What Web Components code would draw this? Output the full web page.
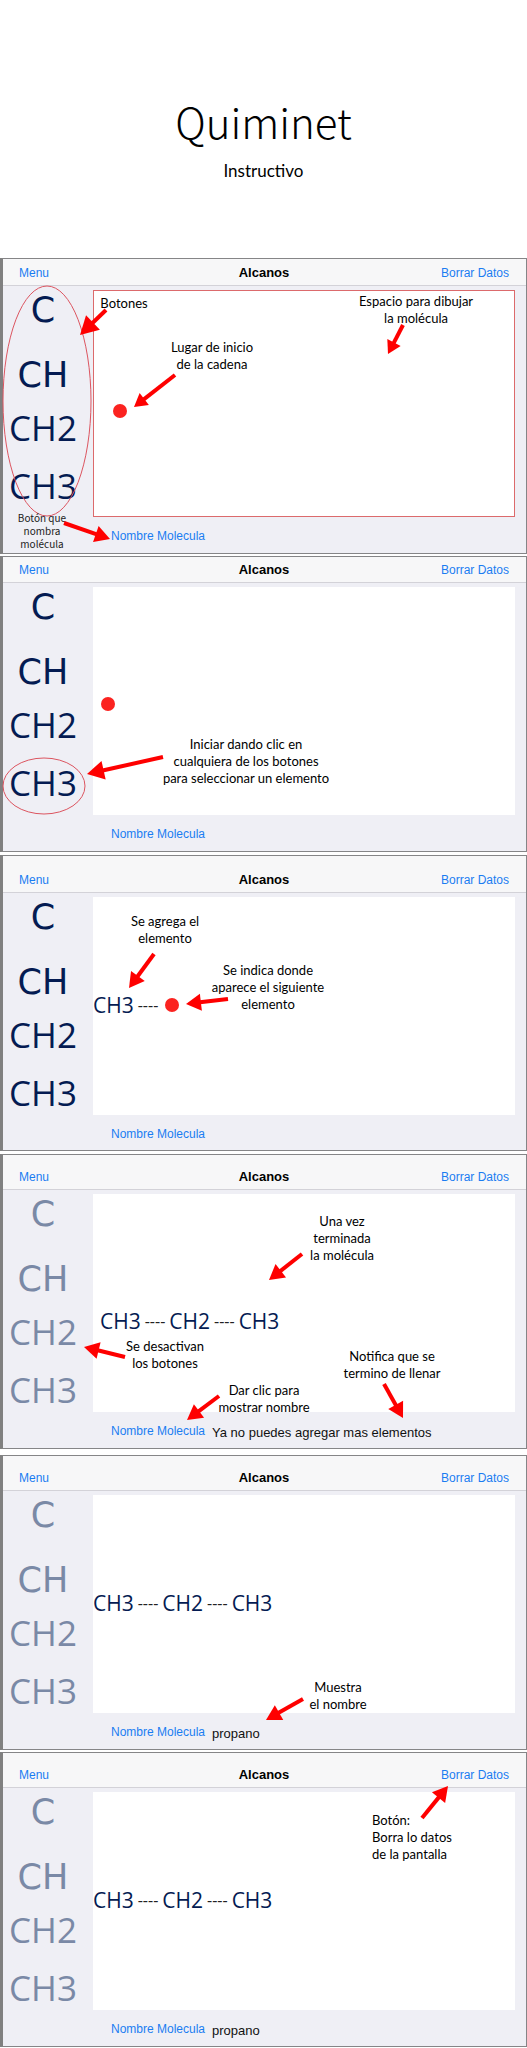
<!DOCTYPE html>
<html lang="es">
<head>
<meta charset="utf-8">
<title>Quiminet - Instructivo</title>
<style>
  body { margin: 0; background: #fff; color: #000; font-family: "Liberation Sans", Arial, sans-serif; }
  main { display: flex; flex-direction: column; }
</style>
</head>
<body>
<main>
  <guide-title heading="Quiminet">Instructivo</guide-title>

  <alkane-screen style="--bar:27px; --canvas:227px; --foot:36px; --gap:2px" outlined>
    <red-dot slot="canvas" style="--x:20px; --y:114px"></red-dot>
    <note-layer slot="notes">
      <ring-mark cx="47" cy="143" rx="44" ry="115"></ring-mark>
      <note-text style="--x:84px; --y:37px; --w:80px">Botones</note-text>
      <note-text style="--x:142px; --y:81px; --w:140px">Lugar de inicio<br>de la cadena</note-text>
      <note-text small style="--x:2px; --y:253px; --w:80px">Botón que<br>nombra<br>molécula</note-text>
      <red-arrow from="106,52" to="80,77" head="20"></red-arrow>
      <red-arrow from="175,117" to="134,149" head="15"></red-arrow>
      <red-arrow from="64,265" to="110,281" head="17"></red-arrow>
    </note-layer>
    <note-layer slot="notes" anchor="right">
      <note-text style="--x:346px; --y:35px; --w:140px">Espacio para dibujar<br>la molécula</note-text>
      <red-arrow from="403,67" to="388,96" head="15"></red-arrow>
    </note-layer>
  </alkane-screen>

  <alkane-screen style="--bar:26px; --canvas:228px; --foot:36px; --gap:3px">
    <red-dot slot="canvas" style="--x:8px; --y:110px"></red-dot>
    <note-layer slot="notes">
      <ring-mark cx="44" cy="230" rx="41" ry="28"></ring-mark>
      <note-text style="--x:146px; --y:180px; --w:200px">Iniciar dando clic en<br>cualquiera de los botones<br>para seleccionar un elemento</note-text>
      <red-arrow from="163,201" to="87,218" head="19"></red-arrow>
    </note-layer>
  </alkane-screen>

  <alkane-screen style="--bar:37px; --canvas:218px; --foot:35px; --gap:3px">
    <molecule-chain slot="canvas" parts="CH3" open style="--x:0px; --y:94px"></molecule-chain>
    <note-layer slot="notes">
      <note-text style="--x:95px; --y:58px; --w:140px">Se agrega el<br>elemento</note-text>
      <note-text style="--x:188px; --y:107px; --w:160px">Se indica donde<br>aparece el siguiente<br>elemento</note-text>
      <red-arrow from="154,99" to="129,133" head="17"></red-arrow>
      <red-arrow from="228,144" to="186,149" head="17"></red-arrow>
    </note-layer>
  </alkane-screen>

  <alkane-screen style="--bar:35px; --canvas:218px; --foot:36px; --gap:6px" off status="Ya no puedes agregar mas elementos">
    <molecule-chain slot="canvas" parts="CH3 CH2 CH3" style="--x:7px; --y:113px"></molecule-chain>
    <note-layer slot="notes">
      <note-text style="--x:272px; --y:59px; --w:140px">Una vez<br>terminada<br>la molécula</note-text>
      <note-text style="--x:95px; --y:184px; --w:140px">Se desactivan<br>los botones</note-text>
      <note-text style="--x:194px; --y:228px; --w:140px">Dar clic para<br>mostrar nombre</note-text>
      <note-text style="--x:322px; --y:194px; --w:140px">Notifica que se<br>termino de llenar</note-text>
      <red-arrow from="302,100" to="269,126" head="17"></red-arrow>
      <red-arrow from="125,203" to="84,193" head="17"></red-arrow>
      <red-arrow from="219,242" to="187,266" head="17"></red-arrow>
      <red-arrow from="384,230" to="403,264" head="17"></red-arrow>
    </note-layer>
  </alkane-screen>

  <alkane-screen style="--bar:35px; --canvas:218px; --foot:36px; --gap:2px" off status="propano">
    <molecule-chain slot="canvas" parts="CH3 CH2 CH3" style="--x:0px; --y:94px"></molecule-chain>
    <note-layer slot="notes">
      <note-text style="--x:268px; --y:224px; --w:140px">Muestra<br>el nombre</note-text>
      <red-arrow from="303,244" to="266,265" head="17"></red-arrow>
    </note-layer>
  </alkane-screen>

  <alkane-screen style="--bar:35px; --canvas:218px; --foot:36px; --gap:0px" off status="propano">
    <molecule-chain slot="canvas" parts="CH3 CH2 CH3" style="--x:0px; --y:94px"></molecule-chain>
    <note-layer slot="notes" anchor="right">
      <note-text left style="--x:372px; --y:60px; --w:100px">Botón:<br>Borra lo datos<br>de la pantalla</note-text>
      <red-arrow from="422,66" to="448,34" head="17"></red-arrow>
    </note-layer>
  </alkane-screen>
</main>

<script>
const shadow = (el, html) => { el.attachShadow({ mode: 'open' }).innerHTML = html; };

/* Page heading */
customElements.define('guide-title', class extends HTMLElement {
  connectedCallback() {
    shadow(this, `<style>
      :host { display: flex; flex-direction: column; align-items: center; gap: 14px; padding: 97px 0 75px;
              font-family: "Noto Sans CJK SC", "Noto Sans", sans-serif; }
      h1 { margin: 0; font-weight: 300; font-size: 42px; line-height: 48px; }
      p { margin: 0; font-family: Lato, sans-serif; font-size: 17px; line-height: 24px; }
    </style><h1>${this.getAttribute('heading')}</h1><p><slot></slot></p>`);
  }
});

/* One screen of the app: bar, element buttons, drawing canvas and footer */
customElements.define('alkane-screen', class extends HTMLElement {
  connectedCallback() {
    const off = this.hasAttribute('off') ? 'disabled' : '';
    const status = this.getAttribute('status');
    shadow(this, `<style>
      :host { display: block; position: relative; margin-bottom: var(--gap); }
      .frame { border: 1px solid #858587; border-left: 3px solid #808080; background: #efeff5; }
      header { box-sizing: border-box; height: var(--bar); display: grid; grid-template-columns: 1fr auto 1fr;
               align-items: end; padding: 0 17px 4px 16px; background: #f7f7f8; border-bottom: 1px solid #d3d2d8; }
      button { margin: 0; padding: 0; border: 0; background: none; font: inherit; cursor: pointer; }
      header button, footer button { font-size: 12px; line-height: 16px; color: #1a7df2; }
      header button:first-child { justify-self: start; }
      header button:last-child { justify-self: end; }
      h2 { margin: 0; font-size: 13px; line-height: 17px; font-weight: 700; }
      .body { display: grid; grid-template-columns: 90px 1fr; padding: 4px 11px 0 0; }
      nav { display: flex; flex-direction: column; align-items: center; padding-right: 10px; }
      nav button { height: 40px; font: 35px/40px "Open Sans", "Noto Sans", sans-serif; color: #041b52; }
      nav button.wide { font-family: "DejaVu Sans", sans-serif; margin-bottom: 25px; }
      nav button.wide + button.wide { margin-bottom: 13px; }
      nav button:nth-child(3) { margin-bottom: 18px; }
      nav button:disabled { color: #7a89a6; }
      .canvas { box-sizing: border-box; position: relative; height: var(--canvas); background: #fff; }
      :host([outlined]) .canvas { outline: 1px solid #dc6a6c; outline-offset: -1px; }
      footer { box-sizing: border-box; height: var(--foot); display: flex; align-items: center; gap: 7px; padding: 2px 0 0 108px; }
      output { font-size: 13px; line-height: 17px; padding-top: 2px; color: #111; }
    </style>
    <div class="frame">
      <header><button type="button">Menu</button><h2>Alcanos</h2><button type="button">Borrar Datos</button></header>
      <div class="body">
        <nav>
          <button type="button" class="wide" ${off}>C</button>
          <button type="button" class="wide" ${off}>CH</button>
          <button type="button" ${off}>CH2</button>
          <button type="button" ${off}>CH3</button>
        </nav>
        <div class="canvas"><slot name="canvas"></slot></div>
      </div>
      <footer><button type="button">Nombre Molecula</button>${status ? `<output>${status}</output>` : ''}</footer>
    </div>
    <slot name="notes"></slot>`);
  }
});

/* Insertion point on the canvas */
customElements.define('red-dot', class extends HTMLElement {
  connectedCallback() {
    shadow(this, `<style>
      :host { position: absolute; left: var(--x); top: var(--y); width: 14px; height: 14px; border-radius: 50%; background: #fb2320; }
    </style>`);
  }
});

/* Molecule drawn on the canvas */
customElements.define('molecule-chain', class extends HTMLElement {
  connectedCallback() {
    const bond = '<i>----</i>';
    const atoms = this.getAttribute('parts').split(' ').map(p => `<b>${p}</b>`).join(bond);
    shadow(this, `<style>
      :host { position: absolute; left: var(--x); top: var(--y); display: flex; align-items: center; gap: 4px;
              font: 21px/28px "Open Sans", "Noto Sans", sans-serif; color: #041b52; white-space: nowrap; }
      b { font-weight: 400; }
      i { font-style: normal; font-size: 16px; color: #222; }
      u { width: 14px; height: 14px; margin-left: 3px; border-radius: 50%; background: #fb2320; }
    </style>${atoms}${this.hasAttribute('open') ? bond + '<u></u>' : ''}`);
  }
});

/* Layer of annotations over a screen */
customElements.define('note-layer', class extends HTMLElement {
  connectedCallback() {
    shadow(this, `<style>
      :host { position: absolute; top: 0; bottom: 0; left: 0; width: 527px; pointer-events: none; }
      :host([anchor="right"]) { left: auto; right: 0; }
    </style><slot></slot>`);
  }
});

customElements.define('note-text', class extends HTMLElement {
  connectedCallback() {
    shadow(this, `<style>
      :host { position: absolute; left: var(--x); top: var(--y); width: var(--w); text-align: center;
              white-space: nowrap; font: 13px/17px Lato, sans-serif; color: #000; }
      :host([small]) { font: 10px/13px "Noto Sans CJK SC", "Noto Sans", sans-serif; color: #222; }
      :host([left]) { text-align: left; }
    </style><slot></slot>`);
  }
});

customElements.define('ring-mark', class extends HTMLElement {
  connectedCallback() {
    const a = n => this.getAttribute(n);
    shadow(this, `<style>:host, svg { position: absolute; inset: 0; width: 100%; height: 100%; }</style>
      <svg aria-hidden="true"><ellipse cx="${a('cx')}" cy="${a('cy')}" rx="${a('rx')}" ry="${a('ry')}" fill="none" stroke="#dc5560"/></svg>`);
  }
});

/* Arrow from a note to the thing it explains; head = width of the arrow head */
customElements.define('red-arrow', class extends HTMLElement {
  connectedCallback() {
    const [x1, y1] = this.getAttribute('from').split(',').map(Number);
    const [x2, y2] = this.getAttribute('to').split(',').map(Number);
    const w = Number(this.getAttribute('head'));
    const len = Math.hypot(x2 - x1, y2 - y1), ux = (x2 - x1) / len, uy = (y2 - y1) / len;
    const l = w - 2, bx = x2 - ux * l, by = y2 - uy * l;
    const p = s => `${bx - uy * s * w / 2},${by + ux * s * w / 2}`;
    shadow(this, `<style>:host, svg { position: absolute; inset: 0; width: 100%; height: 100%; overflow: visible; }</style>
      <svg aria-hidden="true" fill="#fe0000"><path stroke="#fe0000" stroke-width="4" d="M${x1},${y1}L${bx + ux},${by + uy}"/><polygon points="${x2},${y2} ${p(1)} ${p(-1)}"/></svg>`);
  }
});
</script>
</body>
</html>
